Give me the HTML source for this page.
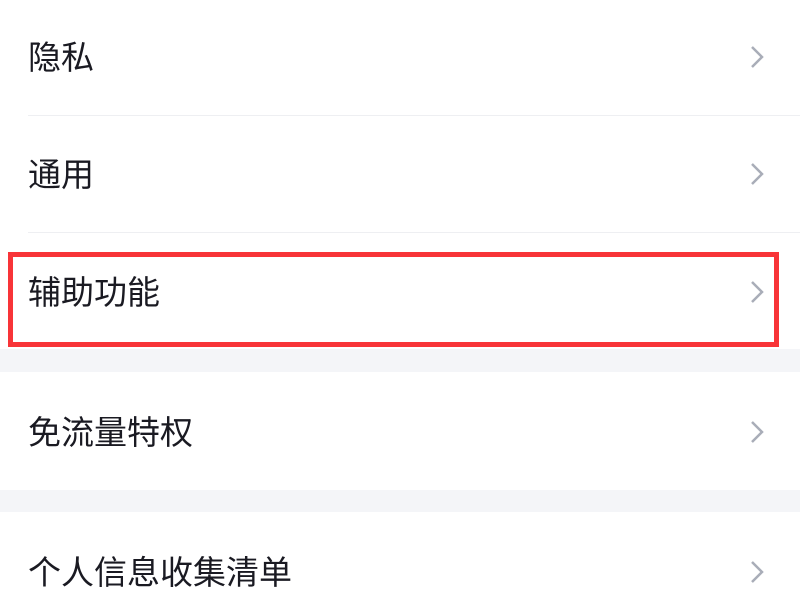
<!DOCTYPE html>
<html><head><meta charset="utf-8"><style>
body{margin:0;width:800px;height:600px;background:#fff;position:relative;overflow:hidden;font-family:"Liberation Sans","Noto Sans CJK SC",sans-serif}
.t{position:absolute;left:28px;font-size:33px;color:#1a1a22;line-height:40px}
.c{position:absolute;left:748px}
.sep{position:absolute;left:28px;right:0;height:1px;background:#eeeff2}
.gray{position:absolute;left:0;right:0;background:#f4f5f8}
.box{position:absolute;left:8px;top:252px;width:761px;height:85px;border:5px solid #f83438}
</style></head><body>
<div class="t" style="top:38px">隐私</div>
<div class="sep" style="top:115px"></div>
<div class="t" style="top:155px">通用</div>
<div class="sep" style="top:232px"></div>
<div class="t" style="top:273px">辅助功能</div>
<div class="gray" style="top:349px;height:23px"></div>
<div class="t" style="top:413px">免流量特权</div>
<div class="gray" style="top:490px;height:22px"></div>
<div class="t" style="top:553px">个人信息收集清单</div>
<svg class="c" style="top:44px" width="20" height="26"><path d="M4 3 L14 13 L4 23" fill="none" stroke="#a9adb8" stroke-width="2.5"/></svg>
<svg class="c" style="top:161px" width="20" height="26"><path d="M4 3 L14 13 L4 23" fill="none" stroke="#a9adb8" stroke-width="2.5"/></svg>
<svg class="c" style="top:279px" width="20" height="26"><path d="M4 3 L14 13 L4 23" fill="none" stroke="#a9adb8" stroke-width="2.5"/></svg>
<svg class="c" style="top:419px" width="20" height="26"><path d="M4 3 L14 13 L4 23" fill="none" stroke="#a9adb8" stroke-width="2.5"/></svg>
<svg class="c" style="top:559px" width="20" height="26"><path d="M4 3 L14 13 L4 23" fill="none" stroke="#a9adb8" stroke-width="2.5"/></svg>
<div class="box"></div>
</body></html>
